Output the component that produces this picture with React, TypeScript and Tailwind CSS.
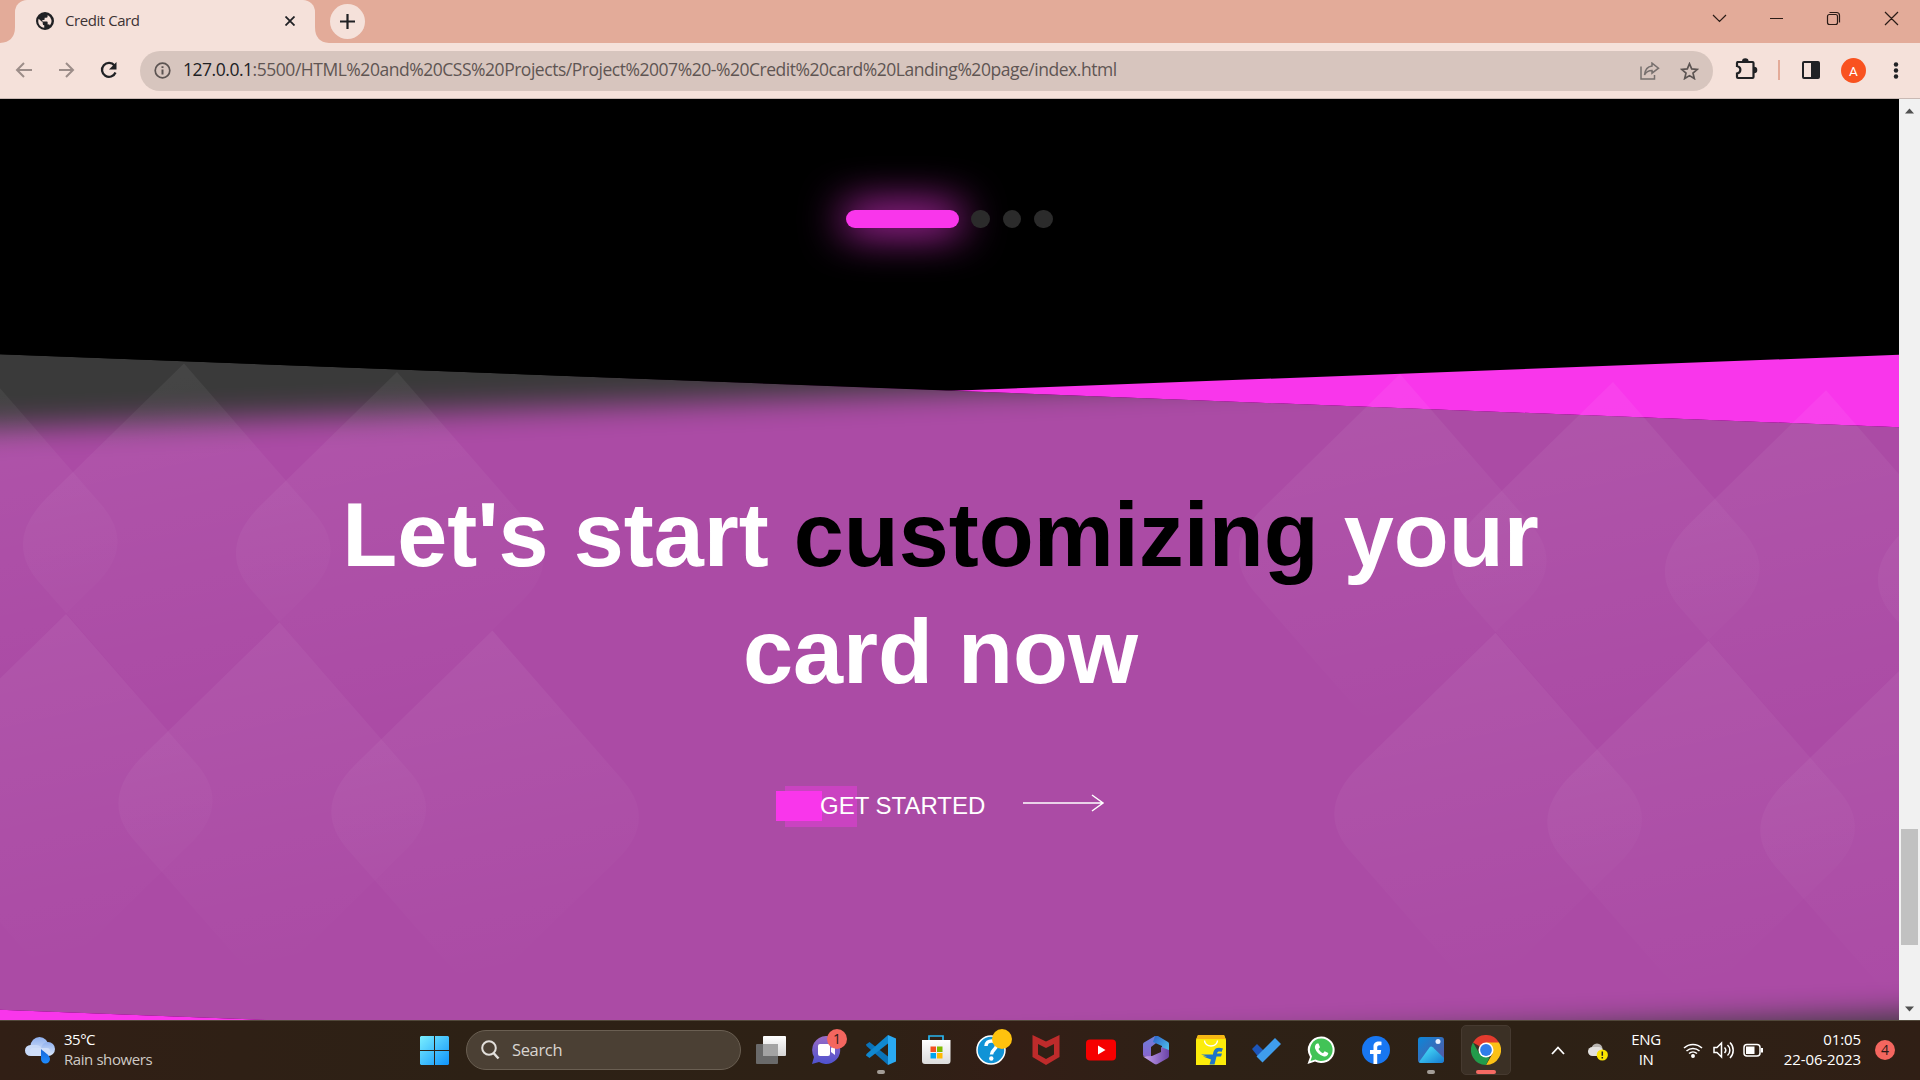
import React from "react";

const TEARDROP =
  "M0 0 L-136 133 Q-183 179 -142 222 L-44 334 Q-14 366 16 336 L124 230 Q167 189 128 147 Z";

const TIPS: [number, number][] = [
  [-29, 355], [184, 363.5], [397, 372],
  [66, 614], [279.5, 622.3], [492.4, 630.5],
  [1400, 374], [1613, 382], [1826, 390.3], [2039, 398.5],
  [1495.4, 632.8], [1708.4, 640.8], [1921.4, 649],
];

function TabStrip() {
  return (
    <div className="flex h-[43px] shrink-0 bg-[#e3ab99]">
      <svg className="w-[15px]" viewBox="0 0 15 43"><path d="M0 43 Q15 42 15 27 V43Z" fill="#f5e1da" /></svg>
      <div className="flex w-[300px] items-center rounded-t-[12px] bg-[#f5e1da] pb-[2px] pl-[21px] pr-[20px]">
        <svg width="18" height="18" viewBox="0 0 24 24" fill="#202124">
          <path d="M12 0a12 12 0 1 0 0 24 12 12 0 0 0 0-24zM3 12c0-1 .2-2 .5-3L9 14v1.500a2 2 0 0 0 2 2V21C6 20.500 3 16.500 3 12zm15.500 6a2 2 0 0 0-2-1.500h-1V13.500a1 1 0 0 0-1-1H8.500v-2h2a1 1 0 0 0 1-1v-2h2a2 2 0 0 0 2-2V4a9 9 0 0 1 3 14z" />
        </svg>
        <span className="ml-[11px] flex-1 whitespace-nowrap font-['Open_Sans'] text-[15px] tracking-[-0.43px] text-[#3c3334]">Credit Card</span>
        <svg width="10" height="10" viewBox="0 0 10 10" stroke="#202124" strokeWidth="1.800"><path d="M.5 .5 9.500 9.500M9.500 .5 .5 9.500" /></svg>
      </div>
      <svg className="w-[14px]" viewBox="0 0 14 43"><path d="M14 43 Q0 42 0 27 V43Z" fill="#f5e1da" /></svg>
      <div className="ml-px mt-[4px] flex h-[35px] w-[35px] items-center justify-center rounded-full bg-[#f5e1da]">
        <svg width="15" height="15" viewBox="0 0 15 15" stroke="#202124" strokeWidth="2.200"><path d="M7.500 0V15M0 7.500H15" /></svg>
      </div>
      <div className="flex-1" />
      <svg className="mr-[28px] w-[179px]" height="36" viewBox="1713 0 179 36" fill="none" stroke="#2a1c17" strokeWidth="1.200" overflow="visible">
        <path d="M1713 15 l6.500 6.500 6.500-6.500M1770 18.500h13M1829.500 12.500h7a3 3 0 0 1 3 3v7M1829.500 14.500h6a2 2 0 0 1 2 2v6a2 2 0 0 1-2 2h-6a2 2 0 0 1-2-2v-6a2 2 0 0 1 2-2zM1885 12l13 13M1898 12l-13 13" />
      </svg>
    </div>
  );
}

function Toolbar() {
  return (
    <div className="flex h-[56px] shrink-0 items-center border-b border-[#c9b9b4] bg-[#f5e1da]">
      <svg className="w-[140px]" height="55" viewBox="0 43 140 55" fill="none" strokeWidth="2">
        <path d="M32 70H17M24 63l-7 7 7 7" stroke="#9c8d89" />
        <path d="M59 70H73M66 63l7 7-7 7" stroke="#9c8d89" />
        <path d="M114.500 65.500A7 7 0 1 0 115.500 72.500" stroke="#202124" strokeWidth="2.300" />
        <path d="M116.500 62v7.500h-7.500z" fill="#202124" />
      </svg>
      <div className="flex h-[40px] w-[1573px] items-center rounded-full bg-[#d7c5be] pl-[14px] pr-[14px]">
        <svg width="17" height="17" viewBox="0 0 17 17" fill="none" stroke="#5c5452" strokeWidth="1.700">
          <circle cx="8.500" cy="8.500" r="7.300" /><path d="M8.500 7.500v5M8.500 4.300v1.800" strokeWidth="2" />
        </svg>
        <span className="-mt-[2px] ml-[12px] flex-1 whitespace-nowrap font-['Open_Sans'] text-[17.5px] tracking-[-0.47px] text-[#5f5553]">
          <span className="text-[#202124]">127.0.0.1</span>:5500/HTML%20and%20CSS%20Projects/Project%2007%20-%20Credit%20card%20Landing%20page/index.html
        </span>
        <svg width="20" height="18" viewBox="0 0 20 18" fill="none" stroke="#77706e" strokeWidth="1.500">
          <path d="M1 4.500V17h13.500V13M12 1.200l6.500 5-6.500 5V8.500C8 8.500 6 10 4.500 13 5 8 7.500 4.500 12 4z" />
        </svg>
        <svg className="ml-[20px]" width="19" height="18" viewBox="0 0 20 19" fill="none" stroke="#5c5452" strokeWidth="1.800">
          <path d="M10 1.800l2.300 5.500 6 .5-4.600 3.900 1.400 5.800L10 14.400l-5.100 3.100 1.400-5.800L1.700 7.800l6-.5z" />
        </svg>
      </div>
      <svg className="w-[207px]" height="55" viewBox="1713 43 207 55">
        <path d="M1737.500 62H1752.500a1 1 0 0 1 1 1V77a1 1 0 0 1-1 1H1738a1 1 0 0 1-1-1V73.500c4.500-1 4.500-6.500 0-7.500V63z" fill="none" stroke="#202124" strokeWidth="2.200" />
        <path d="M1742 61.500a3.300 3.300 0 0 1 6.600 0zM1754 66.700a3.300 3.300 0 0 1 0 6.600z" fill="#202124" />
        <rect x="1778" y="60" width="2" height="20" fill="#e3ab99" />
        <rect x="1803" y="62" width="16" height="16" rx="1" fill="none" stroke="#202124" strokeWidth="2" />
        <rect x="1811" y="62" width="8" height="16" fill="#202124" />
        <circle cx="1853.500" cy="70.500" r="12.500" fill="#f9521f" />
        <text x="1853.500" y="75.500" textAnchor="middle" fontFamily="Roboto" fontSize="13.500" fill="#fff">A</text>
        <g fill="#202124"><circle cx="1896" cy="64.500" r="2.200" /><circle cx="1896" cy="70.500" r="2.200" /><circle cx="1896" cy="76.500" r="2.200" /></g>
      </svg>
    </div>
  );
}

function Landing() {
  return (
    <main className="relative flex h-full w-[1899px] flex-col overflow-hidden bg-black font-['Liberation_Sans']">
      {/* Tilted pink band with a frosted glass sheet over it */}
      <div className="absolute left-[-100px] top-[292px] h-[658px] w-[2100px] rotate-[-2.17deg] bg-[#f936eb]" />
      <div className="absolute left-[-100px] top-[291.5px] h-[655px] w-[2100px] rotate-[2.2deg] overflow-hidden bg-black">
        <div className="absolute left-0 top-[0.5px] h-[658px] w-[2100px] rotate-[-4.37deg] bg-[#fb26ee] blur-[15px]" />
        <div className="absolute inset-0 bg-[rgba(106,106,106,0.55)]" />
      </div>
      <svg className="absolute inset-0" width="1899" height="921" viewBox="0 99 1899 921">
        <defs>
          <linearGradient id="drop" x1="0.35" y1="0" x2="0.55" y2="1">
            <stop offset="0" stopColor="#fff" stopOpacity="0.06" />
            <stop offset="1" stopColor="#fff" stopOpacity="0" />
          </linearGradient>
        </defs>
        {TIPS.map(([x, y]) => (
          <path key={`${x}-${y}`} d={TEARDROP} fill="url(#drop)" transform={`translate(${x} ${y})`} />
        ))}
      </svg>

      <div className="flex items-center pl-[846px] pt-[111px]">
        <span className="h-[18px] w-[113px] rounded-full bg-[#f936eb] shadow-[0_0_43px_3px_#f936eb]" />
        <span className="ml-[12px] h-[18px] w-[19px] rounded-full bg-[#2b2b2b]" />
        <span className="ml-[13px] h-[18px] w-[18px] rounded-full bg-[#2b2b2b]" />
        <span className="ml-[13px] h-[18px] w-[19px] rounded-full bg-[#2b2b2b]" />
      </div>

      <div className="relative mt-[249px] w-[1881px] text-center">
        <h2 className="whitespace-nowrap text-[90px] font-bold leading-[117px] text-white">
          Let's start <span className="text-black">customizing</span> your
          <br />
          card now
        </h2>
      </div>

      <div className="relative mt-[75px] flex h-[41px] items-center pl-[776px]">
        <span className="-mt-[2px] h-[30px] w-[46px] bg-[#f936eb]" />
        <span className="-ml-[37px] h-[41px] w-[72px] bg-[#f936eb]/40" />
        <span className="-ml-[37px] -mt-[2px] whitespace-nowrap text-[24px] leading-[30px] text-white">GET STARTED</span>
        <svg className="-mt-[8px] ml-[38px]" width="82" height="18" viewBox="0 0 82 18" fill="none" stroke="#fff" strokeWidth="1.500">
          <path d="M0 9H79M69 1l11 8-11 8" />
        </svg>
      </div>
    </main>
  );
}

function Scrollbar() {
  return (
    <div className="flex h-full w-[21px] flex-col items-center bg-[#f1f1f1]">
      <svg className="mt-[9px]" width="9" height="6" viewBox="0 0 9 6" fill="#505050"><path d="M0 5.500 4.500 .5 9 5.500z" /></svg>
      <div className="mt-[715px] h-[116px] w-[17px] bg-[#c1c1c1]" />
      <svg className="mt-[61px]" width="9" height="6" viewBox="0 0 9 6" fill="#505050"><path d="M0 .5 4.500 5.500 9 .5z" /></svg>
    </div>
  );
}

function Badge({ cls, children }: { cls: string; children?: React.ReactNode }) {
  return (
    <span className={`absolute left-[29px] top-[-1px] flex h-[20px] w-[20px] items-center justify-center rounded-full pb-px font-['Open_Sans'] text-[14px] text-[#2a1a18] ${cls}`}>
      {children}
    </span>
  );
}

function TaskIcon({ children, extra, active }: { children: React.ReactNode; extra?: React.ReactNode; active?: boolean }) {
  return (
    <div className="relative flex h-[40px] w-[55.05px] items-center justify-center">
      {active && <span className="absolute left-[2.5px] top-[-5px] h-[50px] w-[50px] rounded-[5px] border border-[#463a30] bg-[#3b3025]" />}
      <svg className="relative" width="30" height="30" viewBox="0 0 30 30">{children}</svg>
      {extra}
    </div>
  );
}

function Taskbar() {
  const dot = <span className="absolute left-[23.5px] top-[40px] h-[4px] w-[8px] rounded-full bg-[#a39d97]" />;
  return (
    <footer className="flex h-[60px] shrink-0 items-center border-t border-[#51483a] bg-[linear-gradient(90deg,#311f15,#2d2115_25%,#2e2115_45%,#331e16_53%,#2e2116_62%,#2d2115_80%,#301f15)] pb-px font-['Open_Sans'] text-white">
      <div className="flex w-[420px] items-center pl-[25px]">
        <svg width="30" height="28" viewBox="0 0 30 28">
          <defs>
            <linearGradient id="cl" x1="0" y1="0" x2="0" y2="1"><stop offset="0" stopColor="#8fb0ee" /><stop offset="1" stopColor="#dce8fb" /></linearGradient>
            <linearGradient id="rd" x1="0" y1="0" x2="0" y2="1"><stop offset="0" stopColor="#1565d8" /><stop offset="1" stopColor="#1e8cff" /></linearGradient>
          </defs>
          <circle cx="14.500" cy="10" r="9" fill="url(#cl)" />
          <rect x="0" y="9" width="17" height="11" rx="5.500" fill="#c8d9f8" />
          <circle cx="23" cy="13" r="7" fill="url(#cl)" />
          <rect x="5" y="12" width="20" height="8" rx="3" fill="#cfdef9" />
          <path d="M16 13c3 3 9 6 9 10a4.500 4.500 0 0 1-9 0z" fill="url(#rd)" />
        </svg>
        <div className="-mt-[3px] ml-[9px] whitespace-nowrap text-[15px] leading-[20px]">
          <div className="tracking-[-0.5px]">35°C</div>
          <div className="tracking-[-0.42px] text-[#cfcac5]">Rain showers</div>
        </div>
      </div>
      <svg width="29" height="29" viewBox="0 0 29 29">
        <defs><linearGradient id="win" x1="0" y1="0" x2="1" y2="1"><stop offset="0" stopColor="#7aefff" /><stop offset="1" stopColor="#0f93fb" /></linearGradient></defs>
        <path d="M1 0H14V14H0V1zM15 0H28l1 1V14H15zM0 15H14V29H1L0 28zM15 15H29V28l-1 1H15z" fill="url(#win)" />
      </svg>
      <div className="ml-[17px] flex h-[40px] w-[275px] items-center rounded-full border border-[#6a5f52] bg-[#4b4034] pl-[14px]">
        <svg width="19" height="20" viewBox="0 0 19 20" fill="none" stroke="#e2dfdb" strokeWidth="2"><circle cx="8" cy="8" r="6.800" /><path d="M12.500 13l5 5.500" strokeWidth="2.500" /></svg>
        <span className="ml-[12px] text-[16.5px] tracking-[-0.35px] text-[#d9d5d1]">Search</span>
      </div>
      <div className="ml-[2px] flex w-[771.5px]">
        <TaskIcon>
          <defs><linearGradient id="tv" x1="0" y1="0" x2="0" y2="1"><stop offset="0" stopColor="#fff" /><stop offset="1" stopColor="#d4d4d4" /></linearGradient></defs>
          <rect x="7" y="1" width="23" height="20" rx="1" fill="url(#tv)" />
          <rect x="0" y="9" width="22" height="20" rx="1" fill="#6a6a6a" />
          <rect x="7" y="9" width="15" height="12" fill="#a3a3a3" />
        </TaskIcon>
        <TaskIcon extra={<Badge cls="bg-[#f4665f]">1</Badge>}>
          <defs><linearGradient id="ch" x1="0" y1="0" x2="0" y2="1"><stop offset="0" stopColor="#9a6cc4" /><stop offset="1" stopColor="#4e52cf" /></linearGradient></defs>
          <path d="M15 1a14 14 0 1 1-7 26l-7 2 2-7A14 14 0 0 1 15 1z" fill="url(#ch)" />
          <rect x="7" y="9" width="12" height="12" rx="2" fill="#fff" /><path d="M20 13l4-3v10l-4-3z" fill="#fff" />
        </TaskIcon>
        <TaskIcon extra={dot}>
          <path d="M0 9.500 3.500 7 22 21.500V30L0.500 11z" fill="#0a73ba" />
          <path d="M0 20.500 3.500 23 22 8.500V0L0.500 19z" fill="#1088d0" />
          <path d="M22 0l8 3.500v23L22 30z" fill="#2aa9f2" />
        </TaskIcon>
        <TaskIcon>
          <defs><linearGradient id="st" x1="0" y1="0" x2="0" y2="1"><stop offset="0" stopColor="#fff" /><stop offset="1" stopColor="#dcdcdc" /></linearGradient></defs>
          <path d="M8 6V1h14v5" fill="none" stroke="#27b5ef" strokeWidth="1.700" />
          <path d="M1 5H29.500V26a3 3 0 0 1-3 3H4a3 3 0 0 1-3-3z" fill="url(#st)" />
          <rect x="9.500" y="11.500" width="5.500" height="5.500" fill="#f25022" /><rect x="16" y="11.500" width="5.500" height="5.500" fill="#7fba00" /><rect x="9.500" y="18" width="5.500" height="5.500" fill="#00a4ef" /><rect x="16" y="18" width="5.500" height="5.500" fill="#ffb900" />
        </TaskIcon>
        <TaskIcon extra={<Badge cls="bg-[#ffc20e]" />}>
          <circle cx="15" cy="15" r="14" fill="#1193d6" stroke="#fff" strokeWidth="1.500" />
          <path d="M10 11c0-7 11-6.500 10.500-.5 0 4-5 4-5 9" fill="none" stroke="#fff" strokeWidth="3.500" /><circle cx="15.300" cy="23.500" r="2.200" fill="#fff" />
        </TaskIcon>
        <TaskIcon>
          <path d="M1.500 0 15 6.500 28.500 0V22L15 30 1.500 22z" fill="#be2b2b" /><path d="M7 9l8 4 8-4V19.500l-8 4.500-8-4.500z" fill="#2e2015" />
        </TaskIcon>
        <TaskIcon>
          <rect x="0" y="4.500" width="30" height="21" rx="4" fill="#f60000" /><path d="M12 10.500v9l7.500-4.500z" fill="#fff" />
        </TaskIcon>
        <TaskIcon>
          <defs>
            <linearGradient id="m1" x1="0" y1="0" x2="0" y2="1"><stop offset="0" stopColor="#6d7fd8" /><stop offset="1" stopColor="#8a63cf" /></linearGradient>
            <linearGradient id="m2" x1="0" y1="0" x2="1" y2="1"><stop offset="0" stopColor="#2b62c9" /><stop offset="1" stopColor="#55cdf0" /></linearGradient>
            <linearGradient id="m3" x1="0" y1="0" x2="1" y2="0"><stop offset="0" stopColor="#c9a5ef" /><stop offset="1" stopColor="#6a43a8" /></linearGradient>
          </defs>
          <path d="M14 1 3 7.500Q2 8 2 9.500v11l8 3V12L19 5z" fill="url(#m1)" />
          <path d="M14 1l3 0 10 6q1 .7 1 2V19l-7-4V11L12 7z" fill="url(#m2)" />
          <path d="M28 15v6q0 1-1 2L16.500 29q-1.500.8-3 0L2 21.500l9-.5 9-4V12z" fill="url(#m3)" />
        </TaskIcon>
        <TaskIcon>
          <path d="M2 0H28l2 4.500V30H0V4.500z" fill="#fcec0a" /><path d="M2 0H28l1.500 4H.5z" fill="#f5b714" />
          <path d="M8.500 5.500a6.500 5.500 0 0 0 13 0" fill="none" stroke="#fff" strokeWidth="1.300" />
          <path d="M27 13.500c-8-2.500-9.500 2-10 6H5l6 2h-4l8 3-1.500 5h5l2-8h4.500l1-3h-5c.5-2 2-2.500 4.500-1.500z" fill="#1e74c7" />
        </TaskIcon>
        <TaskIcon>
          <path d="M1 14l5-5 8.500 8.500-4 8.500z" fill="#1d56ba" /><path d="M24 3l6 6-18.500 18.500-6-6z" fill="#3f9ded" />
        </TaskIcon>
        <TaskIcon>
          <path d="M15.500 1.500a13.300 13.300 0 1 1-6.500 25L1.500 29l2.500-7A13.300 13.300 0 0 1 15.500 1.500z" fill="#fff" />
          <path d="M15.500 3.500a11.300 11.300 0 1 1-6 21L4.500 26l1.500-4.800A11.300 11.300 0 0 1 15.500 3.500z" fill="#42c357" />
          <path d="M11 8.500l1.500 0 1.500 3.800-1.500 1.700c1 2 2.500 3.300 4.500 4.200l1.700-1.900 3.600 1.800c-.2 3-2.800 4-5 3.200-4-1.300-7-4.300-8.300-8-.5-2 .5-4 2-4.800z" fill="#fff" />
        </TaskIcon>
        <TaskIcon>
          <circle cx="15" cy="15" r="14" fill="#1877f2" />
          <path d="M12.500 29V19H9v-4h3.500v-3.500c0-4 3-5.500 8-4.700v3.400h-2c-2 0-2.300 1-2.300 2.300V15h4l-.7 4h-3.300v10z" fill="#fff" />
        </TaskIcon>
        <TaskIcon extra={dot}>
          <defs>
            <linearGradient id="ph" x1="0" y1="0" x2="1" y2="1"><stop offset="0" stopColor="#0c87d9" /><stop offset="1" stopColor="#5c55a0" /></linearGradient>
            <linearGradient id="mt" x1="0" y1="0" x2="1" y2="1"><stop offset="0.200" stopColor="#43d6f6" /><stop offset="1" stopColor="#1679d0" /></linearGradient>
          </defs>
          <rect x="2" y="2" width="26" height="26" rx="3" fill="url(#ph)" />
          <path d="M3 27 13.500 12.500q1.500-1.800 3.300-.2L28 23v2a3 3 0 0 1-3 3H5q-1.500 0-2-1z" fill="url(#mt)" />
          <circle cx="22" cy="6.500" r="2.500" fill="#e8f0ff" />
        </TaskIcon>
        <TaskIcon active extra={<span className="absolute left-[17.5px] top-[40px] h-[4px] w-[20px] rounded-full bg-[#f56a63]" />}>
          <path d="M15 15 2 7.500A15 15 0 0 1 28 7.500z" fill="#e33b2e" />
          <path d="M15 7.500H28A15 15 0 0 1 15 30l6.500-11.200z" fill="#fbc116" />
          <path d="M2 7.500 8.500 18.700 15 22l3.500.5L15 30A15 15 0 0 1 2 7.500z" fill="#229b4b" />
          <circle cx="15" cy="15" r="7.500" fill="#fff" /><circle cx="15" cy="15" r="5.900" fill="#2f7de9" />
        </TaskIcon>
      </div>
      <svg className="ml-[36.500px]" width="14" height="9" viewBox="0 0 14 9" fill="none" stroke="#fff" strokeWidth="1.800"><path d="M1 8l6-6.500L13 8" /></svg>
      <svg className="ml-[23px] mt-[3px]" width="20" height="18" viewBox="0 0 20 18">
        <circle cx="9" cy="6" r="5.500" fill="#b9b5b1" /><rect x="0" y="4" width="15" height="9" rx="4.500" fill="#e2e0de" />
        <circle cx="14.300" cy="12" r="5.600" fill="#fbe400" /><path d="M14.300 8.500v4.300M14.300 14v1.500" stroke="#222" strokeWidth="1.500" />
      </svg>
      <div className="-mt-[3px] ml-[17px] w-[42px] text-center text-[15px] leading-[20px] tracking-[-0.4px]">ENG<br />IN</div>
      <svg className="ml-[16px]" width="80" height="20" viewBox="1683 1040 80 20" fill="none" stroke="#fff" strokeWidth="1.500">
        <path d="M1684 1048a13 13 0 0 1 18 0M1686.500 1051a9.500 9.500 0 0 1 13 0M1689 1053.500a6 6 0 0 1 8 0" /><circle cx="1693" cy="1056" r="1.200" fill="#fff" />
        <path d="M1714 1047.500h3l4.500-4.500v14l-4.500-4.500h-3zM1724.500 1047.500a4 4 0 0 1 0 5.500M1727.500 1045a7 7 0 0 1 0 10.500M1730 1042.500a11 11 0 0 1 0 15.500" />
        <rect x="1744" y="1044.500" width="16" height="11.500" rx="3" /><rect x="1746" y="1046.500" width="8.500" height="7.500" fill="#fff" stroke="none" /><path d="M1762 1048v4.500" strokeWidth="2" />
      </svg>
      <div className="-mt-[3px] w-[98px] whitespace-nowrap text-right text-[15px] leading-[20px] tracking-[-0.1px]">01:05<br />22-06-2023</div>
      <span className="ml-[14px] flex h-[20px] w-[20px] items-center justify-center rounded-full bg-[#f4665f] pb-px text-[14px] text-[#2a1a18]">4</span>
    </footer>
  );
}

export default function App() {
  return (
    <div className="flex h-[1080px] w-[1920px] flex-col overflow-hidden">
      <TabStrip />
      <Toolbar />
      <div className="flex h-[921px] shrink-0">
        <Landing />
        <Scrollbar />
      </div>
      <Taskbar />
    </div>
  );
}
